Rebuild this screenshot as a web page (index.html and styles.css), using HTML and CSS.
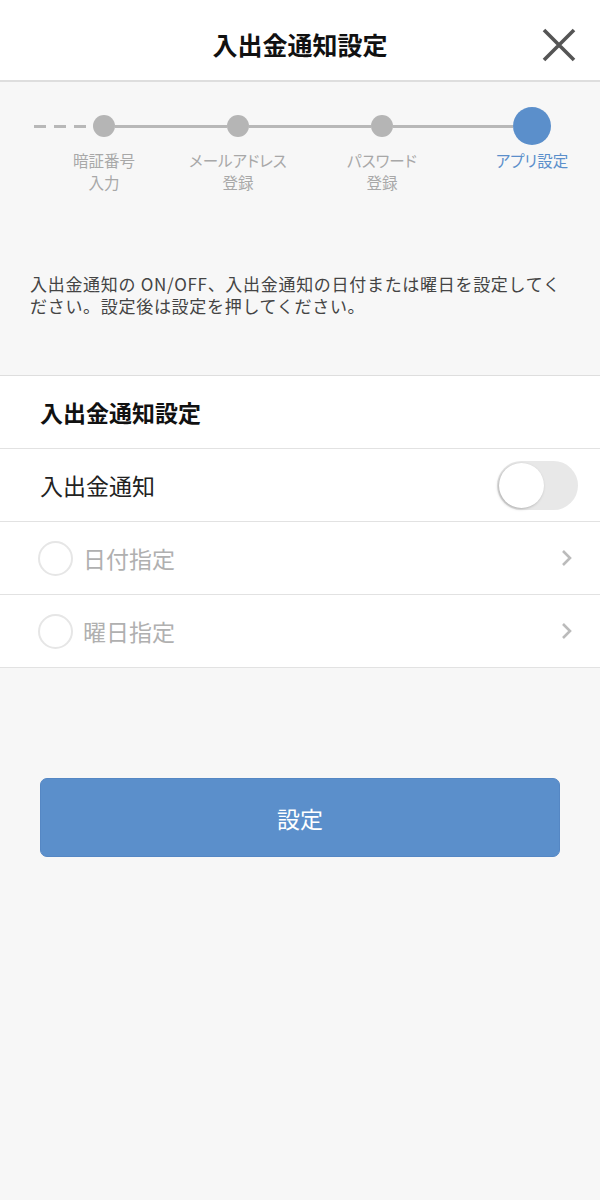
FILE: index.html
```html
<!DOCTYPE html>
<html lang="ja">
<head>
    <meta charset="UTF-8">
    <meta name="viewport" content="width=device-width, initial-scale=1.0">
    <title>入出金通知設定</title>
    <link rel="stylesheet" href="styles.css">
</head>
<body>
    <header class="topbar">
        <h1 class="topbar-title">入出金通知設定</h1>
        <button class="close-btn" aria-label="閉じる">
            <svg width="34" height="34" viewBox="0 0 34 34">
                <path d="M2 2 L32 32 M32 2 L2 32" stroke="#555" stroke-width="3.6" fill="none"/>
            </svg>
        </button>
    </header>

    <div class="stepper">
        <div class="track">
            <span class="dashes"></span>
            <span class="dot"></span>
            <span class="line line-1"></span>
            <span class="dot"></span>
            <span class="line line-2"></span>
            <span class="dot"></span>
            <span class="line line-3"></span>
            <span class="dot dot-current"></span>
        </div>
        <div class="labels">
            <div class="label label-1"><span>暗証番号</span><span>入力</span></div>
            <div class="label label-2"><span>メールアドレス</span><span>登録</span></div>
            <div class="label label-3"><span>パスワード</span><span>登録</span></div>
            <div class="label label-4 current"><span>アプリ設定</span></div>
        </div>
    </div>

    <p class="intro">入出金通知の ON/OFF、入出金通知の日付または曜日を設定してください。設定後は設定を押してください。</p>

    <section class="panel">
        <div class="panel-head">入出金通知設定</div>
        <div class="row">
            <span class="row-label">入出金通知</span>
            <span class="toggle"><span class="knob"></span></span>
        </div>
        <div class="row disabled">
            <span class="radio"></span>
            <span class="row-label">日付指定</span>
            <svg class="chevron" width="14" height="20" viewBox="0 0 14 20">
                <path d="M3 3 L10 10 L3 17" stroke="#bbb" stroke-width="2.6" fill="none"/>
            </svg>
        </div>
        <div class="row disabled">
            <span class="radio"></span>
            <span class="row-label">曜日指定</span>
            <svg class="chevron" width="14" height="20" viewBox="0 0 14 20">
                <path d="M3 3 L10 10 L3 17" stroke="#bbb" stroke-width="2.6" fill="none"/>
            </svg>
        </div>
    </section>

    <div class="actions">
        <button class="submit-btn">設定</button>
    </div>
</body>
</html>
```

FILE: styles.css
```css
body {
    margin: 0;
    font-family: "Noto Sans CJK JP", "Noto Sans", sans-serif;
    background: #f7f7f7;
    color: #222;
}
.topbar {
    height: 80px;
    background: #fff;
    border-bottom: 2px solid #dedede;
    display: flex;
    align-items: center;
    justify-content: center;
    position: relative;
}
.topbar-title {
    margin: 0;
    font-size: 25px;
    font-weight: bold;
    color: #111;
    padding-top: 8px;
}
.close-btn {
    position: absolute;
    right: 24px;
    top: 28px;
    background: none;
    border: none;
    padding: 0;
    width: 34px;
    height: 34px;
}
.stepper {
    padding-top: 25px;
    height: 166px;
}
.track {
    display: flex;
    align-items: center;
    height: 38px;
    padding-left: 34px;
}
.dashes {
    width: 59px;
    height: 3px;
    background: repeating-linear-gradient(90deg, #b8b8b8 0 12px, transparent 12px 20px);
}
.dot {
    width: 22px;
    height: 22px;
    border-radius: 50%;
    background: #b5b5b5;
    flex-shrink: 0;
}
.dot-current {
    width: 38px;
    height: 38px;
    background: #5b8fcb;
}
.line {
    height: 3px;
    background: #b8b8b8;
}
.line-1 { width: 112px; }
.line-2 { width: 122px; }
.line-3 { width: 120px; }
.labels {
    display: flex;
    padding-left: 44px;
    margin-top: 4px;
}
.label {
    display: flex;
    flex-direction: column;
    align-items: center;
    font-size: 15.5px;
    line-height: 22px;
    color: #a8a8a8;
    font-feature-settings: "palt";
}
.label-1 { width: 120px; }
.label-2 { width: 148px; }
.label-3 { width: 140px; }
.label-4 { width: 80px; margin-left: 40px; }
.label.current {
    color: #5b8fcb;
}
.intro {
    margin: 0;
    padding: 0 28px 0 30px;
    font-size: 17px;
    letter-spacing: 0.7px;
    line-height: 22px;
    color: #444;
    height: 102px;
}
.panel {
    background: #fff;
    border-top: 1px solid #dedede;
}
.panel-head {
    height: 72px;
    display: flex;
    align-items: center;
    padding-left: 40px;
    font-size: 23px;
    font-weight: bold;
    color: #111;
    border-bottom: 1px solid #e2e2e2;
}
.row {
    height: 72px;
    display: flex;
    align-items: center;
    padding: 0 22px 0 40px;
    border-bottom: 1px solid #e2e2e2;
}
.row-label {
    flex: 1;
    font-size: 23px;
    color: #222;
}
.row.disabled {
    padding-left: 38px;
}
.row.disabled .row-label {
    color: #b0b0b0;
    padding-left: 10px;
}
.radio {
    width: 31px;
    height: 31px;
    border: 2px solid #e6e6e6;
    border-radius: 50%;
}
.chevron {
    margin-right: 4px;
}
.toggle {
    width: 81px;
    height: 49px;
    border-radius: 25px;
    background: #e8e8e8;
    display: flex;
    align-items: center;
    padding-left: 2px;
    box-sizing: border-box;
}
.knob {
    width: 45px;
    height: 45px;
    border-radius: 50%;
    background: #fff;
    box-shadow: -1px 1px 3px rgba(0, 0, 0, 0.25);
}
.actions {
    padding: 110px 40px 0 40px;
}
.submit-btn {
    width: 520px;
    height: 79px;
    border: 1px solid #5587c4;
    border-radius: 7px;
    background: #5b8fcb;
    color: #fff;
    font-family: inherit;
    font-size: 23px;
}
```
